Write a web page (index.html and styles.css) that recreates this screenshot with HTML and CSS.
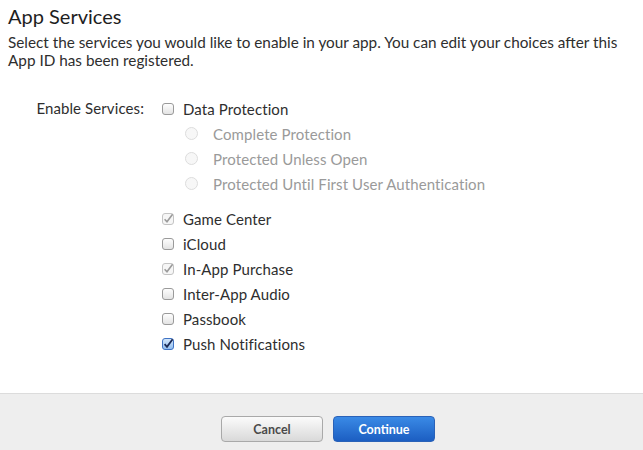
FILE: index.html
```html
<!DOCTYPE html>
<html>
<head>
<meta charset="utf-8">
<link rel="stylesheet" href="styles.css">
</head>
<body>
<div class="page">
  <div class="content">
    <h1 class="title">App Services</h1>
    <p class="desc">Select the services you would like to enable in your app. You can edit your choices after this App ID has been registered.</p>
    <div class="form">
      <div class="label">Enable Services:</div>
      <div class="options">
        <div class="opt">
          <svg class="cb" width="12" height="12" viewBox="0 0 12 12"><defs><linearGradient id="g1" x1="0" y1="0" x2="0" y2="1"><stop offset="0" stop-color="#ffffff"/><stop offset="1" stop-color="#e2e2e2"/></linearGradient></defs><rect x="0.5" y="0.5" width="11" height="11" rx="2.5" fill="url(#g1)" stroke="#9a9a9a"/></svg>
          <span>Data Protection</span>
        </div>
        <div class="sub">
          <div class="opt dis">
            <svg class="rd" width="13" height="13" viewBox="0 0 13 13"><circle cx="6.5" cy="6.5" r="6" fill="#f7f7f7" stroke="#dcdcdc"/></svg>
            <span>Complete Protection</span>
          </div>
          <div class="opt dis">
            <svg class="rd" width="13" height="13" viewBox="0 0 13 13"><circle cx="6.5" cy="6.5" r="6" fill="#f7f7f7" stroke="#dcdcdc"/></svg>
            <span>Protected Unless Open</span>
          </div>
          <div class="opt dis">
            <svg class="rd" width="13" height="13" viewBox="0 0 13 13"><circle cx="6.5" cy="6.5" r="6" fill="#f7f7f7" stroke="#dcdcdc"/></svg>
            <span>Protected Until First User Authentication</span>
          </div>
        </div>
        <div class="group">
          <div class="opt">
            <svg class="cb" width="12" height="12" viewBox="0 0 12 12"><rect x="0.5" y="0.5" width="11" height="11" rx="2.5" fill="#f6f6f6" stroke="#c4c4c4"/><path d="M2.6 6.2 L5 8.8 L10.6 1.2" fill="none" stroke="#9b9b9b" stroke-width="1.6"/></svg>
            <span>Game Center</span>
          </div>
          <div class="opt">
            <svg class="cb" width="12" height="12" viewBox="0 0 12 12"><rect x="0.5" y="0.5" width="11" height="11" rx="2.5" fill="url(#g1)" stroke="#9a9a9a"/></svg>
            <span>iCloud</span>
          </div>
          <div class="opt">
            <svg class="cb" width="12" height="12" viewBox="0 0 12 12"><rect x="0.5" y="0.5" width="11" height="11" rx="2.5" fill="#f6f6f6" stroke="#c4c4c4"/><path d="M2.6 6.2 L5 8.8 L10.6 1.2" fill="none" stroke="#9b9b9b" stroke-width="1.6"/></svg>
            <span>In-App Purchase</span>
          </div>
          <div class="opt">
            <svg class="cb" width="12" height="12" viewBox="0 0 12 12"><rect x="0.5" y="0.5" width="11" height="11" rx="2.5" fill="url(#g1)" stroke="#9a9a9a"/></svg>
            <span>Inter-App Audio</span>
          </div>
          <div class="opt">
            <svg class="cb" width="12" height="12" viewBox="0 0 12 12"><rect x="0.5" y="0.5" width="11" height="11" rx="2.5" fill="url(#g1)" stroke="#9a9a9a"/></svg>
            <span>Passbook</span>
          </div>
          <div class="opt">
            <svg class="cb" width="12" height="12" viewBox="0 0 12 12"><defs><linearGradient id="g2" x1="0" y1="0" x2="0" y2="1"><stop offset="0" stop-color="#d6e8fb"/><stop offset="1" stop-color="#8fbcef"/></linearGradient></defs><rect x="0.5" y="0.5" width="11" height="11" rx="2.5" fill="url(#g2)" stroke="#3f73c4"/><path d="M2.6 6.2 L5 8.8 L10.6 1.2" fill="none" stroke="#1b2a55" stroke-width="1.8"/></svg>
            <span>Push Notifications</span>
          </div>
        </div>
      </div>
    </div>
  </div>
  <div class="footer">
    <button class="btn cancel">Cancel</button>
    <button class="btn continue">Continue</button>
  </div>
</div>
</body>
</html>
```

FILE: styles.css
```css
html, body {
  margin: 0;
  padding: 0;
  background: #ffffff;
}
body {
  font-family: "Lato", "Open Sans", sans-serif;
  color: #2e2e2e;
  width: 643px;
  height: 450px;
  overflow: hidden;
}
.page {
  display: flex;
  flex-direction: column;
  height: 450px;
}
.content {
  flex: 1;
  padding: 4px 8px 0 8px;
}
.title {
  margin: 0;
  font-size: 20px;
  font-weight: normal;
  line-height: 24px;
  color: #1e1e1e;
}
.desc {
  margin: 5px 0 0 0;
  font-size: 15.3px;
  line-height: 18px;
  color: #2e2e2e;
}
.form {
  display: flex;
  gap: 18px;
  margin-top: 27px;
  font-size: 15px;
  letter-spacing: 0.1px;
}
.label {
  width: 136px;
  text-align: right;
  line-height: 25px;
}
.options {
  display: flex;
  flex-direction: column;
}
.opt {
  display: flex;
  align-items: center;
  height: 25px;
  gap: 9px;
}
.cb {
  display: block;
  flex: none;
}
.sub {
  padding-left: 23px;
}
.sub .opt {
  gap: 15px;
}
.rd {
  display: block;
  flex: none;
}
.dis {
  color: #9a9a9a;
}
.group {
  margin-top: 10px;
}
.footer {
  height: 56px;
  border-top: 1px solid #dcdcdc;
  background: #eeeeee;
  display: flex;
  justify-content: center;
  align-items: flex-start;
  gap: 10px;
  padding-left: 13px;
}
.btn {
  margin-top: 22px;
  width: 102px;
  height: 26px;
  border-radius: 4px;
  font-family: "Lato", "Open Sans", sans-serif;
  font-weight: bold;
  font-size: 12.5px;
  padding: 0;
  cursor: pointer;
}
.cancel {
  border: 1px solid #a9a9a9;
  background: linear-gradient(#fbfbfb, #d9d9d9);
  color: #4a4a4a;
}
.continue {
  border: 1px solid #2a62b8;
  background: linear-gradient(#3a8ae6, #1c5ec2);
  color: #ffffff;
}
```
